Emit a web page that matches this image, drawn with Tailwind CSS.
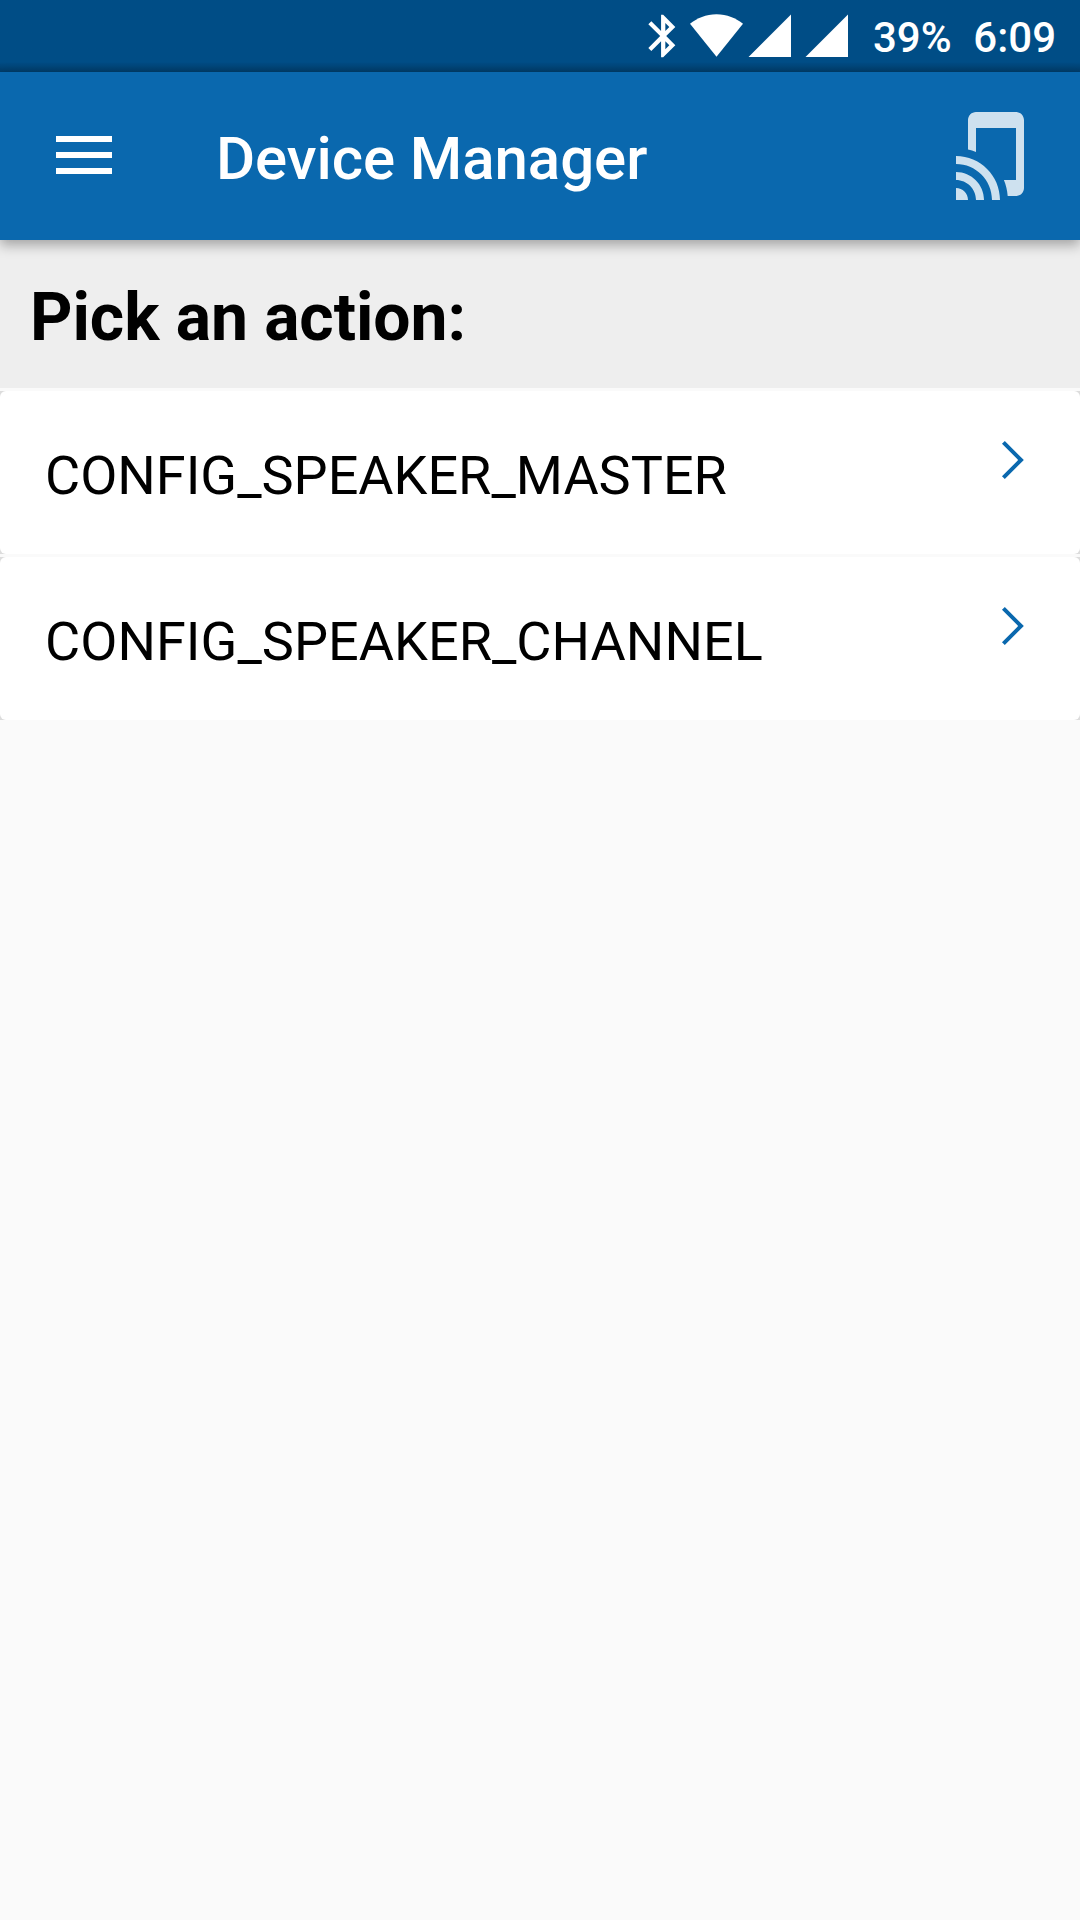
<!DOCTYPE html>
<html lang="en">
<head>
<meta charset="utf-8">
<title>Device Manager</title>
<script src="https://cdn.jsdelivr.net/npm/@tailwindcss/browser@4"></script>
</head>
<body class="flex h-[1920px] w-[1080px] flex-col overflow-hidden bg-[#fafafa] font-[Roboto,sans-serif] text-black">
  <!-- Status bar -->
  <div class="flex h-[72px] shrink-0 items-center bg-linear-to-b from-[#004d86] from-86% to-[#003c69] pl-[638px] pr-6 text-white">
    <svg class="h-[72px] w-[212px] shrink-0" viewBox="638 0 212 72" fill="currentColor">
      <path transform="translate(637.7 10.6) scale(2.125)" d="M17.71 7.71L12 2h-1v7.59L6.41 5 5 6.41 10.59 12 5 17.59 6.41 19 11 14.41V22h1l5.71-5.71-4.3-4.29 4.3-4.29zM13 5.83l1.88 1.88L13 9.59V5.83zm1.88 10.46L13 18.17v-3.76l1.88 1.88z"/>
      <path d="M716.5 56.7L690 23.8C697 18 706 14.2 716.5 14.2S736 18 743 23.8z"/>
      <path d="M748.5 57H791V14.5zM805.5 57H848V14.5z"/>
    </svg>
    <div class="flex grow justify-between pl-[23px] pt-[3px] text-[42px] font-medium leading-[48px]"><span>39%</span><span>6:09</span></div>
  </div>

  <!-- App bar -->
  <header class="relative z-10 flex h-[168px] shrink-0 items-center bg-[#0a68ae] pl-14 pr-9 text-white shadow-[0_5px_12px_rgba(0,0,0,0.32)]">
    <svg class="mt-[-2px] h-[38px] w-14 shrink-0" viewBox="0 0 56 38" fill="currentColor"><path d="M0 0h56v6H0zM0 16h56v6H0zM0 32h56v6H0z"/></svg>
    <h1 class="grow pl-[104px] pt-[5px] text-[60px] font-medium leading-[70px] tracking-[-0.07px]">Device Manager</h1>
    <svg class="size-24 shrink-0 text-white/80" viewBox="0 0 24 24" fill="currentColor"><path d="M2 16v2c2.76 0 5 2.24 5 5h2c0-3.87-3.13-7-7-7zm0 4v3h3c0-1.66-1.34-3-3-3zm0-8v2c4.97 0 9 4.03 9 9h2c0-6.08-4.93-11-11-11zM17 1L7 1c-1.1 0-2 .9-2 2v7.37c.69.16 1.36.37 2 .64V5h10v13h-3.03c.52 1.25.84 2.59.95 4H17c1.1 0 2-.9 2-2V3c0-1.1-.9-2-2-2z"/></svg>
  </header>

  <h2 class="h-[148px] shrink-0 bg-[#eeeeee] pl-[30px] pt-[7px] text-[66px] font-bold leading-[141px] tracking-[-0.08px]">Pick an action:</h2>

  <!-- Actions -->
  <main class="flex flex-col gap-[3px] pt-[3px]">
    <div class="bg-[#dcdcdc]">
      <div class="flex h-[163px] items-center justify-between rounded-[6px] bg-white pl-[45px] pr-14">
        <span class="pt-[7px] text-[54px] leading-[64px]">CONFIG_SPEAKER_MASTER</span>
        <svg class="mt-[-25px] h-10 w-[23px] text-[#0a68ae]" viewBox="0 0 23 40" fill="none" stroke="currentColor" stroke-width="4"><path d="M2.4 2.4L20 20 2.4 37.6"/></svg>
      </div>
    </div>
    <div class="bg-[#dcdcdc]">
      <div class="flex h-[163px] items-center justify-between rounded-[6px] bg-white pl-[45px] pr-14">
        <span class="pt-[7px] text-[54px] leading-[64px] tracking-[0.04px]">CONFIG_SPEAKER_CHANNEL</span>
        <svg class="mt-[-25px] h-10 w-[23px] text-[#0a68ae]" viewBox="0 0 23 40" fill="none" stroke="currentColor" stroke-width="4"><path d="M2.4 2.4L20 20 2.4 37.6"/></svg>
      </div>
    </div>
  </main>
</body>
</html>
